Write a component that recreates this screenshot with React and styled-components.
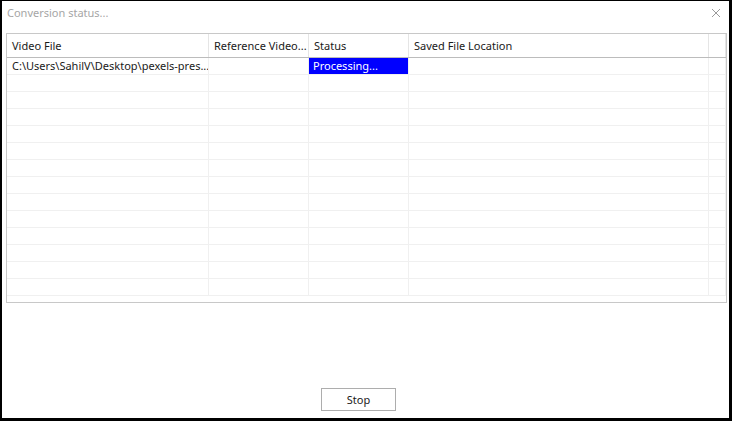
import React from "react";
import styled, { createGlobalStyle } from "styled-components";

const Global = createGlobalStyle`
  html, body { margin: 0; padding: 0; background: #000; }
  body { font-family: "Noto Sans", "Liberation Sans", sans-serif; }
  * { box-sizing: border-box; }
`;

const Frame = styled.div`
  width: 732px;
  height: 421px;
  background: #fff;
  border-style: solid;
  border-color: #000;
  border-width: 1px 3px 3px 2px;
  display: flex;
  flex-direction: column;
`;

const TitleBar = styled.div`
  height: 32px;
  display: flex;
  align-items: center;
  justify-content: space-between;
  padding: 0 8px 9px 5px;
`;

const Title = styled.span`
  font-size: 11px;
  color: #a6a6a6;
`;

const Close = styled.span`
  width: 10px;
  height: 10px;
  display: flex;
  align-items: center;
  justify-content: center;
`;

const ListView = styled.div`
  margin: 0 2px 0 4px;
  height: 270px;
  border: 1px solid #c8c8c8;
  display: flex;
  flex-direction: column;
  overflow: hidden;
`;

const cols = "202px 100px 100px 300px 1fr";

const Header = styled.div`
  display: grid;
  grid-template-columns: ${cols};
  height: 24px;
  border-bottom: 1px solid #bcbcbc;
`;

const HeaderCell = styled.div`
  font-size: 11px;
  color: #1a1a1a;
  padding-left: 5px;
  display: flex;
  align-items: center;
  border-right: 1px solid #e5e5e5;
  white-space: nowrap;
  overflow: hidden;
`;

const Row = styled.div`
  display: grid;
  grid-template-columns: ${cols};
  height: 17px;
  border-bottom: 1px solid #f0f0f0;
`;

const Cell = styled.div`
  font-size: 11px;
  color: ${(p) => (p.$selected ? "#fff" : "#1a1a1a")};
  background: ${(p) => (p.$selected ? "#0000ff" : "transparent")};
  padding-left: ${(p) => (p.$selected ? "4px" : "5px")};
  display: flex;
  align-items: center;
  border-right: 1px solid #f0f0f0;
  white-space: nowrap;
  overflow: hidden;
  line-height: 16px;
`;

const Footer = styled.div`
  flex: 1;
  display: flex;
  align-items: flex-end;
  padding: 0 0 7px 319px;
`;

const Button = styled.button`
  width: 75px;
  height: 23px;
  background: #fff;
  border: 1px solid #adadad;
  font-family: "Noto Sans", "Liberation Sans", sans-serif;
  font-size: 11px;
  color: #1a1a1a;
  padding: 0;
`;

const headers = ["Video File", "Reference Video...", "Status", "Saved File Location", ""];

export default function App() {
  const rows = Array.from({ length: 14 });
  return (
    <>
      <Global />
      <Frame>
        <TitleBar>
          <Title>Conversion status...</Title>
          <Close>
            <svg width="10" height="10" viewBox="0 0 10 10">
              <path d="M1 1L9 9M9 1L1 9" stroke="#9a9a9a" strokeWidth="1" />
            </svg>
          </Close>
        </TitleBar>
        <ListView>
          <Header>
            {headers.map((h, i) => (
              <HeaderCell key={i}>{h}</HeaderCell>
            ))}
          </Header>
          {rows.map((_, r) => (
            <Row key={r}>
              {r === 0 ? (
                <>
                  <Cell>C:\Users\SahilV\Desktop\pexels-pres...</Cell>
                  <Cell />
                  <Cell $selected>Processing...</Cell>
                  <Cell />
                  <Cell />
                </>
              ) : (
                <>
                  <Cell />
                  <Cell />
                  <Cell />
                  <Cell />
                  <Cell />
                </>
              )}
            </Row>
          ))}
        </ListView>
        <Footer>
          <Button>Stop</Button>
        </Footer>
      </Frame>
    </>
  );
}
